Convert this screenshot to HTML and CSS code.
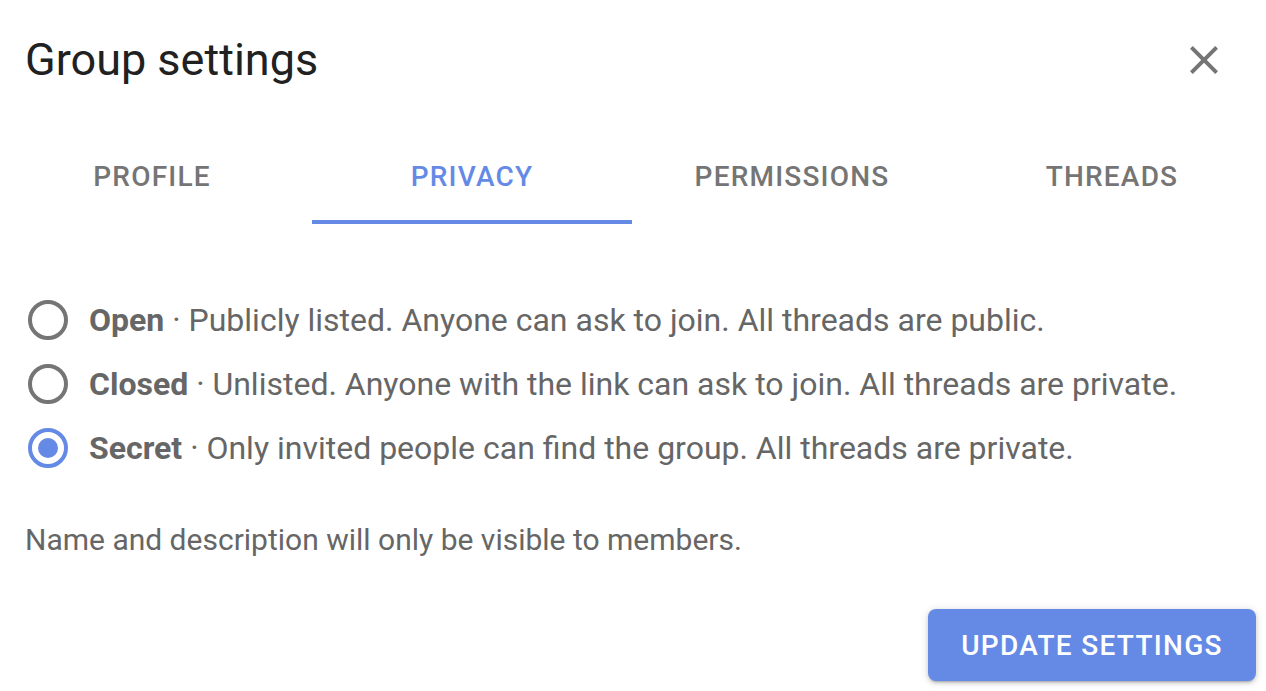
FILE: index.html
```html
<!DOCTYPE html>
<html lang="en">
<head>
<meta charset="utf-8">
<title>Group settings</title>
<link rel="stylesheet" href="styles.css">
</head>
<body>
<div class="dialog">
  <header class="header">
    <h1 class="title">Group settings</h1>
    <button class="close" aria-label="Close">
      <svg viewBox="0 0 24 24" width="48" height="48"><path d="M19 6.41 17.59 5 12 10.59 6.41 5 5 6.41 10.59 12 5 17.59 6.41 19 12 13.41 17.59 19 19 17.59 13.41 12z" fill="currentColor"/></svg>
    </button>
  </header>
  <nav class="tabs">
    <div class="tab">Profile</div>
    <div class="tab active">Privacy</div>
    <div class="tab">Permissions</div>
    <div class="tab">Threads</div>
  </nav>
  <div class="content">
    <div class="options">
      <label class="option"><span class="radio"></span><span class="label"><b>Open</b> · Publicly listed. Anyone can ask to join. All threads are public.</span></label>
      <label class="option"><span class="radio"></span><span class="label"><b>Closed</b> · Unlisted. Anyone with the link can ask to join. All threads are private.</span></label>
      <label class="option"><span class="radio checked"></span><span class="label"><b>Secret</b> · Only invited people can find the group. All threads are private.</span></label>
    </div>
    <p class="note">Name and description will only be visible to members.</p>
  </div>
  <div class="actions">
    <button class="primary">Update settings</button>
  </div>
</div>
</body>
</html>
```

FILE: styles.css
```css
* { box-sizing: border-box; }
html, body { margin: 0; padding: 0; background: #fff; }
body { font-family: Roboto, "Noto Sans", sans-serif; color: rgba(0,0,0,0.87); }
.dialog { width: 1266px; height: 691px; overflow: hidden; }
.header { display: flex; align-items: center; justify-content: space-between; padding: 36px 38px 0 25px; height: 84px; }
.title { margin: 0; font-size: 45px; font-weight: 400; line-height: 48px; color: #212121; }
.close { width: 48px; height: 48px; padding: 0; border: 0; background: none; color: #757575; display: flex; }
.tabs { display: flex; margin: 46px 0 0 -8px; height: 94px; }
.tab { flex: none; width: 320px; display: flex; align-items: center; justify-content: center; font-size: 28px; font-weight: 500; letter-spacing: 1.2px; text-transform: uppercase; color: #757575; border-bottom: 4px solid transparent; padding-top: 2px; }
.tab.active { color: #658ae6; border-bottom-color: #658ae6; }
.content { padding: 76px 25px 0 28px; }
.options { display: flex; flex-direction: column; gap: 24px; }
.option { display: flex; align-items: center; gap: 21px; height: 40px; font-size: 32px; color: #666; }
.option b { font-weight: 700; }
.radio { width: 40px; height: 40px; border-radius: 50%; border: 4px solid #757575; flex: none; position: relative; }
.radio.checked { border-color: #658ae6; }
.radio.checked::after { content: ""; position: absolute; inset: 6px; border-radius: 50%; background: #658ae6; }
.note { margin: 52px 0 0 -3px; font-size: 30px; line-height: 40px; color: #666; }
.actions { display: flex; justify-content: flex-end; padding: 49px 10px 0 0; }
.primary { width: 328px; height: 72px; border: 0; border-radius: 8px; background: #658ae6; color: #fff; font-family: inherit; font-size: 28px; font-weight: 500; letter-spacing: 1.3px; text-transform: uppercase; box-shadow: 0 3px 2px -2px rgba(0,0,0,0.2), 0 2px 4px rgba(0,0,0,0.14), 0 1px 10px rgba(0,0,0,0.12); }
```
